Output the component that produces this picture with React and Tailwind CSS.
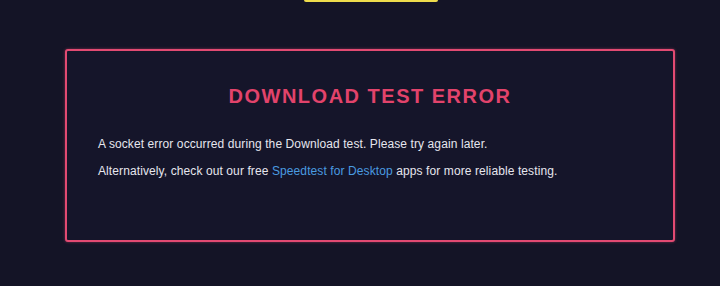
export default function App() {
  return (
    <div
      className="w-[720px] h-[286px] bg-[#141426] overflow-hidden"
      style={{ fontFamily: '"Liberation Sans", Arial, sans-serif' }}
    >
      {/* top button edge */}
      <div className="ml-[304px] w-[134px] h-[2px] rounded-b-[6px] bg-[#eedc4c]" />

      <div className="ml-[65px] mt-[47px] w-[610px] h-[193px] rounded-[3px] border-2 border-[#e24a72] bg-[#15152a] shadow-[0_0_3px_rgba(226,74,114,0.5)] px-[31px] pt-[33px]">
        <h1 className="text-center text-[20px] leading-[24px] font-bold tracking-[1.5px] text-[#e2436b]">
          DOWNLOAD TEST ERROR
        </h1>
        <p className="mt-[28px] text-[12px] leading-[16px] tracking-[0.1px] text-[#e6e6ee]">
          A socket error occurred during the Download test. Please try again later.
        </p>
        <p className="mt-[11px] text-[12px] leading-[16px] tracking-[0.1px] text-[#e6e6ee]">
          Alternatively, check out our free{" "}
          <a href="#" className="text-[#4a9be0]">
            Speedtest for Desktop
          </a>{" "}
          apps for more reliable testing.
        </p>
      </div>
    </div>
  );
}
